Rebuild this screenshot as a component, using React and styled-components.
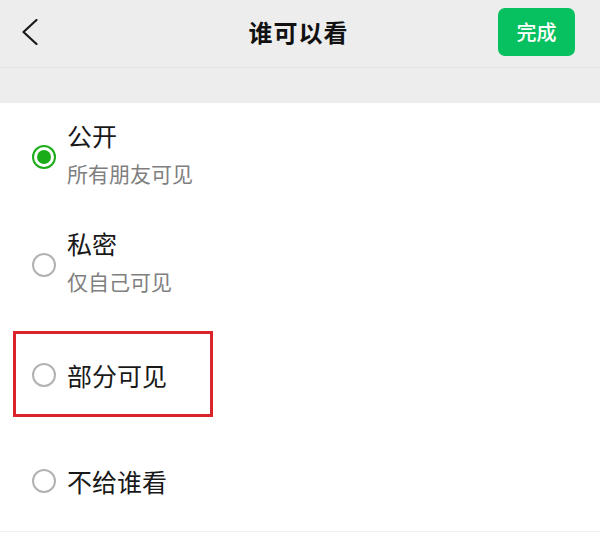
import React from 'react';
import styled, { createGlobalStyle } from 'styled-components';

const GlobalStyle = createGlobalStyle`
  html, body {
    margin: 0;
    padding: 0;
    background: #ffffff;
  }
  body {
    font-family: "Noto Sans CJK SC", "Noto Sans", sans-serif;
    color: #191919;
  }
`;

const Page = styled.div`
  width: 600px;
  height: 533px;
  overflow: hidden;
  display: flex;
  flex-direction: column;
  background: #ffffff;
`;

const NavBar = styled.header`
  height: 68px;
  box-sizing: border-box;
  padding: 0 25px 4px 22px;
  display: grid;
  grid-template-columns: 1fr auto 1fr;
  align-items: center;
  background: #ededed;
  border-bottom: 1px solid #e2e2e2;
`;

const BackButton = styled.button`
  justify-self: start;
  display: flex;
  align-items: center;
  padding: 0;
  border: 0;
  background: none;
  color: #191919;
  cursor: pointer;
`;

const Title = styled.h1`
  margin: 0;
  font-size: 24px;
  font-weight: 600;
  line-height: 32px;
  color: #111111;
  letter-spacing: 1px;
`;

const DoneButton = styled.button`
  justify-self: end;
  width: 77px;
  height: 48px;
  border: 0;
  border-radius: 7px;
  background: #07c160;
  color: #ffffff;
  font-family: inherit;
  font-size: 20px;
  font-weight: 500;
  cursor: pointer;
`;

const Gap = styled.div`
  height: 35px;
  background: #ededed;
`;

const List = styled.ul`
  list-style: none;
  margin: 0;
  padding: 0;
  flex: 1;
  display: flex;
  flex-direction: column;
`;

const Row = styled.li`
  position: relative;
  height: ${(p) => p.$height}px;
  box-sizing: border-box;
  padding-left: 32px;
  display: flex;
  align-items: center;
  gap: 11px;
  border-bottom: ${(p) => (p.$last ? '1px solid #f0f0f0' : '0')};
`;

const Radio = styled.span`
  flex: none;
  width: 24px;
  height: 24px;
  box-sizing: border-box;
  border-radius: 50%;
  border: 2px solid ${(p) => (p.$checked ? '#1aad19' : '#b2b2b2')};
  margin-top: ${(p) => (p.$offset ? 8 : 0)}px;
  display: flex;
  align-items: center;
  justify-content: center;

  &::after {
    content: '';
    display: ${(p) => (p.$checked ? 'block' : 'none')};
    width: 14px;
    height: 14px;
    border-radius: 50%;
    background: #1aad19;
  }
`;

const Texts = styled.div`
  display: flex;
  flex-direction: column;
`;

const Label = styled.span`
  font-size: 25px;
  line-height: 32px;
  color: #191919;
`;

const Hint = styled.span`
  margin-top: 8px;
  font-size: 21px;
  line-height: 28px;
  color: #7f7f7f;
`;

const Highlight = styled.div`
  position: absolute;
  left: 13px;
  top: 12px;
  width: 200px;
  height: 86px;
  box-sizing: border-box;
  border: 3px solid #d9242c;
  pointer-events: none;
`;

const options = [
  { key: 'public', label: '公开', hint: '所有朋友可见', height: 100, checked: true },
  { key: 'private', label: '私密', hint: '仅自己可见', height: 116 },
  { key: 'partial', label: '部分可见', height: 111, marked: true },
  { key: 'exclude', label: '不给谁看', height: 102 },
];

const ChevronLeft = () => (
  <svg width="16" height="26" viewBox="0 0 16 26" fill="none">
    <polyline
      points="14.5,1 1.5,13 14.5,25"
      stroke="currentColor"
      strokeWidth="2.2"
      strokeLinecap="round"
      strokeLinejoin="round"
    />
  </svg>
);

const App = () => (
  <Page>
    <GlobalStyle />
    <NavBar>
      <BackButton aria-label="返回">
        <ChevronLeft />
      </BackButton>
      <Title>谁可以看</Title>
      <DoneButton>完成</DoneButton>
    </NavBar>
    <Gap />
    <List>
      {options.map((o, i) => (
        <Row key={o.key} $height={o.height} $last={i === options.length - 1}>
          <Radio $checked={o.checked} $offset={!!o.hint} />
          <Texts>
            <Label>{o.label}</Label>
            {o.hint && <Hint>{o.hint}</Hint>}
          </Texts>
          {o.marked && <Highlight />}
        </Row>
      ))}
    </List>
  </Page>
);

export default App;
